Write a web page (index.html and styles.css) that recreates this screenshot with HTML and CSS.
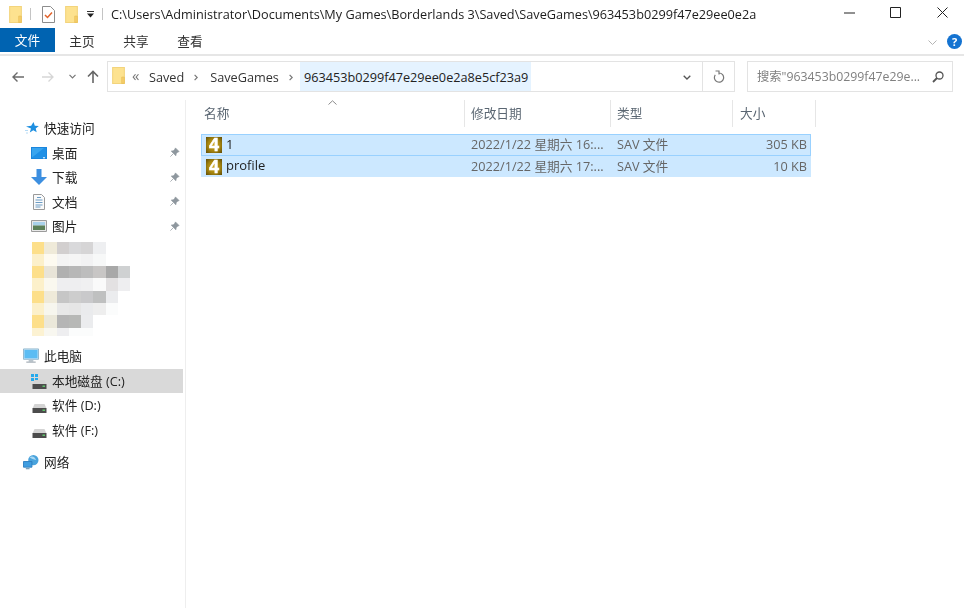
FILE: index.html
```html
<!DOCTYPE html>
<html lang="zh">
<head>
<meta charset="utf-8">
<title>963453b0299f47e29ee0e2a</title>
<link rel="stylesheet" href="styles.css">
</head>
<body>
<svg class="defs" width="0" height="0" aria-hidden="true">
  <defs>
    <symbol id="folder" viewBox="0 0 12 16">
      <path d="M.5.500h11v15H.5z" fill="#fde28f" stroke="#f3d47c"/>
      <path d="M9 9.500h2.500v6H9z" fill="#f6cf6b" stroke="#e8bd55" stroke-width=".6"/>
    </symbol>
    <symbol id="pin" viewBox="0 0 12 12">
      <path d="M7 1l4 4-1.500.5L7.800 7.300 7.500 9.500 2.500 4.500 4.700 4.200 6.500 2.500zM4.500 7.500L1.500 10.500" fill="#8e979e" stroke="#8e979e" stroke-width=".8"/>
    </symbol>
    <symbol id="drive" viewBox="0 0 15 9">
      <path d="M2.500 0h10L14.500 4.500H.5z" fill="#d4d4d4"/>
      <path d="M.5 4h14v5H.5z" fill="#4c4c4c"/>
      <path d="M10.500 5.500h2.500v1.500h-2.500z" fill="#5ec46a"/>
    </symbol>
  </defs>
</svg>

<header class="titlebar">
  <svg class="qa-folder"><use href="#folder"/></svg>
  <span class="qa-sep first"></span>
  <svg class="qa-doc" viewBox="0 0 13 17">
    <path d="M.5.500h8l4 4v12H.5z" fill="#fff" stroke="#8d8d8d"/>
    <path d="M3 9l2.500 2.500L10 6.500" fill="none" stroke="#e2632b" stroke-width="1.500"/>
  </svg>
  <svg class="qa-folder second"><use href="#folder"/></svg>
  <svg class="qa-drop" viewBox="0 0 7 7">
    <path d="M0 .5h7" stroke="#333" fill="none"/>
    <path d="M0 2.500h7L3.500 6.500z" fill="#222"/>
  </svg>
  <span class="qa-sep second"></span>
  <span class="title-path">C:\Users\Administrator\Documents\My Games\Borderlands 3\Saved\SaveGames\963453b0299f47e29ee0e2a</span>
  <div class="win-controls">
    <svg class="win-min" viewBox="0 0 11 10"><path d="M0 5h11" stroke="#222"/></svg>
    <svg class="win-max" viewBox="0 0 11 11"><path d="M.5.500h10v10H.5z" fill="none" stroke="#222"/></svg>
    <svg class="win-close" viewBox="0 0 11 11"><path d="M.5.500l10 10M10.500.500l-10 10" fill="none" stroke="#222"/></svg>
  </div>
</header>

<nav class="ribbon">
  <span class="tab-file">文件</span>
  <span class="tab">主页</span>
  <span class="tab">共享</span>
  <span class="tab">查看</span>
  <svg class="rib-chev" viewBox="0 0 9 5"><path d="M.5.500L4.500 4.500 8.500.500" fill="none" stroke="#b4b4b4"/></svg>
  <span class="help">?</span>
</nav>

<section class="addressrow">
  <div class="navbtns">
    <svg class="nav-arrow" viewBox="0 0 12 10"><path d="M12 5H1M5.500.500L1 5l4.500 4.500" fill="none" stroke="#6b6b6b" stroke-width="1.400"/></svg>
    <svg class="nav-arrow fwd" viewBox="0 0 12 10"><path d="M0 5h11M6.500.500L11 5 6.500 9.500" fill="none" stroke="#d6d6d6" stroke-width="1.300"/></svg>
    <svg class="nav-down" viewBox="0 0 7 5"><path d="M.5.800L3.500 3.800 6.500.800" fill="none" stroke="#777" stroke-width="1.200"/></svg>
    <svg class="nav-up" viewBox="0 0 12 13"><path d="M6 13V1.500M1 6.500l5-5 5 5" fill="none" stroke="#666" stroke-width="1.600"/></svg>
  </div>
  <div class="addressbox">
    <svg class="addr-folder"><use href="#folder"/></svg>
    <span class="addr-more">«</span>
    <span class="crumb">Saved</span>
    <svg class="crumb-chev" viewBox="0 0 4 7"><path d="M.6.800L3.200 3.500.6 6.200" fill="none" stroke="#777" stroke-width="1.200"/></svg>
    <span class="crumb">SaveGames</span>
    <svg class="crumb-chev" viewBox="0 0 4 7"><path d="M.6.800L3.200 3.500.6 6.200" fill="none" stroke="#777" stroke-width="1.200"/></svg>
    <span class="crumb-edit">963453b0299f47e29ee0e2a8e5cf23a9</span>
    <svg class="addr-drop" viewBox="0 0 8 5"><path d="M.7.700L4 4 7.300.700" fill="none" stroke="#555" stroke-width="1.300"/></svg>
    <span class="addr-refresh">
      <svg viewBox="0 0 12 13"><path d="M6 3A4.600 4.600 0 1 1 2.300 4.900M2.500 1H6v3.500" fill="none" stroke="#777" stroke-width="1.200"/></svg>
    </span>
  </div>
  <div class="searchbox">
    <span class="search-text">搜索"963453b0299f47e29e...</span>
    <svg class="search-icon" viewBox="0 0 12 12"><circle cx="7.500" cy="4.500" r="3.500" fill="none" stroke="#555" stroke-width="1.300"/><path d="M5 7l-4 4" stroke="#555" stroke-width="1.800"/></svg>
  </div>
</section>

<main class="body">
  <aside class="sidebar">
    <div class="side-row top">
      <svg class="ic-star" viewBox="0 0 14 14"><path d="M8.500 1l1.300 3.700 4 .2-3.100 2.500 1 3.900L8.300 9.200 4.800 11.600 6 7.600 1 5.500l5.200-.7z" fill="#1e8fe0"/><path d="M0 9.500h3M1 12h2" stroke="#b5daf5"/></svg>
      <span>快速访问</span>
    </div>
    <div class="side-row sub">
      <svg class="ic" viewBox="0 0 16 16"><path d="M0 2h16v12H0z" fill="#1b86dd"/><path d="M1 3h14v9.500H1z" fill="#39a5ef"/><path d="M1 12.500L13 3h2v9.500z" fill="#1f90e6"/><path d="M12 12.800h2" stroke="#fff"/></svg>
      <span>桌面</span><svg class="pin"><use href="#pin"/></svg>
    </div>
    <div class="side-row sub">
      <svg class="ic" viewBox="0 0 16 16"><path d="M5.500 0h5v8H16l-8 8-8-8h5.500z" fill="#3d8fe0"/></svg>
      <span>下载</span><svg class="pin"><use href="#pin"/></svg>
    </div>
    <div class="side-row sub">
      <svg class="ic" viewBox="0 0 16 16"><path d="M2.500.500h8l3 3v12h-11z" fill="#fafafa" stroke="#9a9a9a"/><path d="M6 3.500h4M4.500 6h7M4.500 8.500h7M4.500 11h7M4.500 13h5" stroke="#6c9cc4"/></svg>
      <span>文档</span><svg class="pin"><use href="#pin"/></svg>
    </div>
    <div class="side-row sub">
      <svg class="ic" viewBox="0 0 16 16"><path d="M.5 2.500h15v11H.5z" fill="#e9e9e9" stroke="#9c9c9c"/><path d="M2 4h12v3.500H2z" fill="#a9d1ea"/><path d="M2 7.500h12V12H2z" fill="#5c8058"/></svg>
      <span>图片</span><svg class="pin"><use href="#pin"/></svg>
    </div>

    <div class="pixels">
      <i class="y1"></i><i class="p1"></i><i class="p2"></i><i class="p3"></i><i class="p4"></i><i class="p5"></i><i></i><i></i>
      <i class="y2"></i><i class="p6"></i><i class="p7"></i><i class="p8"></i><i class="p9"></i><i class="p10"></i><i></i><i></i>
      <i class="y1"></i><i class="p11"></i><i class="p12"></i><i class="p13"></i><i class="p14"></i><i class="p15"></i><i class="p16"></i><i class="p17"></i>
      <i class="y2"></i><i class="p18"></i><i class="p19"></i><i class="p19"></i><i class="p20"></i><i class="p21"></i><i class="p22"></i><i class="p19"></i>
      <i class="y1"></i><i class="p1"></i><i class="p23"></i><i class="p24"></i><i class="p25"></i><i class="p26"></i><i class="p27"></i><i></i>
      <i class="y2"></i><i class="p28"></i><i class="p29"></i><i class="p30"></i><i class="p31"></i><i class="p32"></i><i class="p33"></i><i></i>
      <i class="y1"></i><i class="p34"></i><i class="p35"></i><i class="p36"></i><i class="p27"></i><i></i><i></i><i></i>
      <i class="y3"></i><i class="p37"></i><i class="p19"></i><i class="p33"></i><i class="p33"></i><i></i><i></i><i></i>
    </div>

    <div class="side-row top">
      <svg class="ic-pc" viewBox="0 0 17 16"><path d="M.5.500h16v11H.5z" fill="#cfe9fa" stroke="#8fb4cc"/><path d="M1.500 1.500h14v9h-14z" fill="#5bbcf3"/><path d="M6 12h5v2H6z" fill="#b9c4cc"/><path d="M3.500 14.500h10" stroke="#8d99a3"/></svg>
      <span>此电脑</span>
    </div>
    <div class="side-row sub selected">
      <span class="ic-drive-c">
        <svg class="win-logo" viewBox="0 0 7 7"><path d="M0 0h3v3H0zM4 0h3v3H4zM0 4h3v3H0zM4 4h3v3H4z" fill="#25a9ec"/></svg>
        <svg class="drive-c"><use href="#drive"/></svg>
      </span>
      <span>本地磁盘 (C:)</span>
    </div>
    <div class="side-row sub">
      <span class="ic-drive"><svg class="drive"><use href="#drive"/></svg></span>
      <span>软件 (D:)</span>
    </div>
    <div class="side-row sub">
      <span class="ic-drive"><svg class="drive"><use href="#drive"/></svg></span>
      <span>软件 (F:)</span>
    </div>
    <div class="side-row top net">
      <svg class="ic-pc" viewBox="0 0 17 16"><circle cx="11" cy="6" r="5.500" fill="#4aa3dc"/><path d="M7 3c3-2 6 0 7 3-3-1-5-1-7-3z" fill="#a9d8f3"/><path d="M.5 7.500h9v6h-9z" fill="#3f9de0" stroke="#2f7fc0"/><path d="M3 15h4" stroke="#7da0b8" stroke-width="1.500"/></svg>
      <span>网络</span>
    </div>
  </aside>

  <section class="content">
    <span class="sort-caret"><svg viewBox="0 0 9 5"><path d="M.5 4.500L4.500.800 8.500 4.500" fill="none" stroke="#8a8a8a"/></svg></span>
    <div class="list-head">
      <span class="head-cell first">名称</span>
      <span class="head-cell">修改日期</span>
      <span class="head-cell">类型</span>
      <span class="head-cell">大小</span>
    </div>
    <div class="file-row focus">
      <span class="cell-name"><span class="file-icon">4</span><span class="name-text">1</span></span>
      <span class="cell-muted">2022/1/22 星期六 16:...</span>
      <span class="cell-muted">SAV 文件</span>
      <span class="cell-size">305 KB</span>
    </div>
    <div class="file-row">
      <span class="cell-name"><span class="file-icon">4</span><span class="name-text">profile</span></span>
      <span class="cell-muted">2022/1/22 星期六 17:...</span>
      <span class="cell-muted">SAV 文件</span>
      <span class="cell-size">10 KB</span>
    </div>
  </section>
</main>
</body>
</html>
```

FILE: styles.css
```css
* { box-sizing: border-box; }
html, body { margin: 0; padding: 0; }
body {
  width: 964px;
  height: 608px;
  overflow: hidden;
  background: #fff;
  color: #222;
  font: 12.700px/16px "Open Sans", "Noto Sans CJK SC", sans-serif;
  display: flex;
  flex-direction: column;
  filter: blur(.3px);
}
svg { display: block; flex: none; }
.defs { position: absolute; }

/* title bar */
.titlebar { height: 28px; display: flex; align-items: center; flex: none; }
.qa-folder { width: 13px; height: 17px; margin-left: 9px; }
.qa-folder.second { margin-left: 10px; }
.qa-sep { width: 1px; height: 12px; background: #c4c4c4; }
.qa-sep.first { margin-left: 8px; }
.qa-sep.second { margin-left: 8px; }
.qa-doc { width: 13px; height: 17px; margin-left: 11px; }
.qa-drop { width: 7px; height: 7px; margin-left: 9px; }
.title-path { margin-left: 8px; white-space: nowrap; color: #1c1c1c; }
.win-controls {
  position: absolute;
  left: 844px;
  top: 7px;
  display: flex;
  align-items: center;
}
.win-min { width: 11px; height: 10px; }
.win-max { width: 11px; height: 11px; margin-left: 35px; }
.win-close { width: 11px; height: 11px; margin-left: 36px; }

/* ribbon */
.ribbon {
  height: 28px;
  flex: none;
  display: flex;
  align-items: flex-start;
  border-bottom: 2px solid #e6e6e6;
  padding-right: 2px;
}
.tab-file {
  width: 55px; height: 24px;
  background: #0063b1;
  color: #fff;
  text-align: center;
  line-height: 25px;
}
.tab { width: 54px; height: 24px; line-height: 27px; text-align: center; color: #333; }
.rib-chev { width: 9px; height: 5px; margin: 12px 0 0 auto; }
.help {
  width: 15px; height: 15px; margin: 6px 0 0 10px;
  border-radius: 50%;
  background: #1473d1;
  color: #fff;
  font-size: 11px; font-weight: 700;
  line-height: 15px;
  text-align: center;
}

/* address row */
.addressrow { height: 44px; flex: none; display: flex; align-items: flex-start; padding-top: 5px; }
.navbtns { width: 107px; height: 31px; display: flex; align-items: center; padding-left: 12px; }
.nav-arrow { width: 12px; height: 10px; }
.nav-arrow.fwd { margin-left: 18px; }
.nav-down { width: 7px; height: 5px; margin-left: 15px; }
.nav-up { width: 12px; height: 13px; margin-left: 11px; }

.addressbox {
  width: 628px; height: 31px;
  border: 1px solid #e3e3e3;
  display: flex;
  align-items: stretch;
  padding-left: 4px;
}
.addr-folder { width: 13px; height: 17px; margin: 5px 0 0; }
.addr-more { margin-left: 7px; color: #777; line-height: 27px; font-size: 15px; width: 10px; }
.crumb { line-height: 30px; color: #333; margin-left: 7px; }
.crumb-chev { width: 4px; height: 7px; margin: 12px 0 0 10px; }
.crumb + .crumb-chev + .crumb { margin-left: 12px; }
.crumb-edit {
  margin-left: 7px;
  background: #e5f3ff;
  padding: 0 3px 0 4px;
  line-height: 30px;
  color: #222;
}
.addr-drop { width: 8px; height: 5px; margin: 13px 0 0 auto; }
.addr-refresh {
  width: 32px;
  margin-left: 11px;
  border-left: 1px solid #e3e3e3;
  display: flex; align-items: center; justify-content: center;
}
.addr-refresh svg { width: 12px; height: 13px; }

.searchbox {
  width: 206px; height: 31px;
  margin-left: 12px;
  border: 1px solid #e3e3e3;
  display: flex;
  align-items: center;
  padding-left: 9px;
}
.search-text { color: #808080; white-space: nowrap; font-size: 12.300px; }
.search-icon { width: 12px; height: 12px; margin-left: auto; margin-right: 8px; }

/* body */
.body { flex: 1; display: flex; min-height: 0; }
.sidebar {
  width: 186px; flex: none;
  border-right: 1px solid #eeeeee;
  padding-top: 16px;
}
.side-row {
  height: 24.500px;
  margin-right: 2px;
  display: flex;
  align-items: center;
  color: #222;
  white-space: nowrap;
}
.side-row.top { padding-left: 23px; }
.side-row.top > span { margin-left: 5px; }
.side-row.net { margin-top: 8px; }
.side-row.sub { padding-left: 31px; }
.side-row.sub > span:not(.ic-drive):not(.ic-drive-c) { margin-left: 5px; }
.selected { background: #d9d9d9; }
.ic { width: 16px; height: 16px; }
.ic-star { width: 14px; height: 14px; margin-left: 2px; }
.ic-pc { width: 16px; height: 16px; }
.pin { width: 11px; height: 11px; margin-left: auto; margin-right: 3px; }
.ic-drive, .ic-drive-c { position: relative; width: 16px; height: 16px; flex: none; }
.drive, .drive-c { width: 15px; height: 9px; position: absolute; left: 1px; top: 7px; }
.win-logo { width: 7px; height: 7px; position: absolute; left: 0; top: 1px; }
.pixels {
  height: 105.500px;
  padding: 3px 0 0 32px;
  display: grid;
  grid-template-columns: repeat(8, 12.250px);
  grid-template-rows: repeat(7, 12.300px) 8.500px;
}
.pixels i { display: block; }
.y1 { background: #fddf8a; } .y2 { background: #fcf0ca; } .y3 { background: #fcf2d2; }
.p1 { background: #efead9; } .p2 { background: #d2cfcf; } .p3 { background: #d9d9db; }
.p4 { background: #d6d5d6; } .p5 { background: #eeeff1; } .p6 { background: #fdfaf0; }
.p7 { background: #f3f3f3; } .p8 { background: #f5f5f5; } .p9 { background: #f2f2f3; }
.p10 { background: #f7f8f8; } .p11 { background: #e8e4d8; } .p12 { background: #b0b0b0; }
.p13 { background: #b7b7b7; } .p14 { background: #bdbdbd; } .p15 { background: #c8c6c5; }
.p16 { background: #a8a8a8; } .p17 { background: #cfd1d2; } .p18 { background: #faf8ef; }
.p19 { background: #eeeef0; } .p20 { background: #f0f0f1; } .p21 { background: #fafafa; }
.p22 { background: #e3e1e2; } .p23 { background: #c6c6c6; } .p24 { background: #cdcdcd; }
.p25 { background: #c9c9cb; } .p26 { background: #bfc0c0; } .p27 { background: #ebecee; }
.p28 { background: #f7f6ee; } .p29 { background: #e8e8e8; } .p30 { background: #e6e6e6; }
.p31 { background: #eaebed; } .p32 { background: #eeeeee; } .p33 { background: #fbfcfc; }
.p34 { background: #ebe8da; } .p35 { background: #b5b5b5; } .p36 { background: #b7b8b6; }
.p37 { background: #f8f7f0; }

/* file list */
.content { flex: 1; position: relative; padding-left: 15px; min-width: 0; }
.sort-caret { position: absolute; left: 142px; top: 0; }
.sort-caret svg { width: 9px; height: 5px; }
.list-head { display: grid; grid-template-columns: 264px 146px 122px 83px; height: 34px; }
.file-row { display: grid; grid-template-columns: 263px 146px 122px 79px; width: 610px; }
.head-cell {
  height: 27px;
  line-height: 27px;
  padding-left: 6px;
  color: #5a6672;
  border-right: 1px solid #e6e6e6;
}
.head-cell.first { padding-left: 3px; }
.head-cell:last-child { padding-left: 7px; }
.file-row {
  height: 22px;
  background: #cce8ff;
  align-items: center;
  border: 1px solid #cce8ff;
}
.file-row + .file-row { height: 21px; }
.file-row.focus { border-color: #99d1ff; }
.cell-name { display: flex; align-items: center; padding-left: 4px; color: #1e1e1e; font-size: 13px; line-height: 15px; }
.name-text { margin-top: -2px; }
.cell-muted { margin-top: -2px; padding-left: 6px; color: #666; white-space: nowrap; }
.cell-size { margin-top: -2px; text-align: right; padding-right: 5px; color: #666; }
.file-icon {
  width: 16px; height: 16px;
  margin-right: 4px;
  background: radial-gradient(circle at 50% 50%, #d0a820, #a5850f 55%, #5f4b08);
  color: #fff;
  font: 900 18px/16px "Liberation Sans", sans-serif;
  text-align: center;
  -webkit-text-stroke: .5px #fff;
}
```
